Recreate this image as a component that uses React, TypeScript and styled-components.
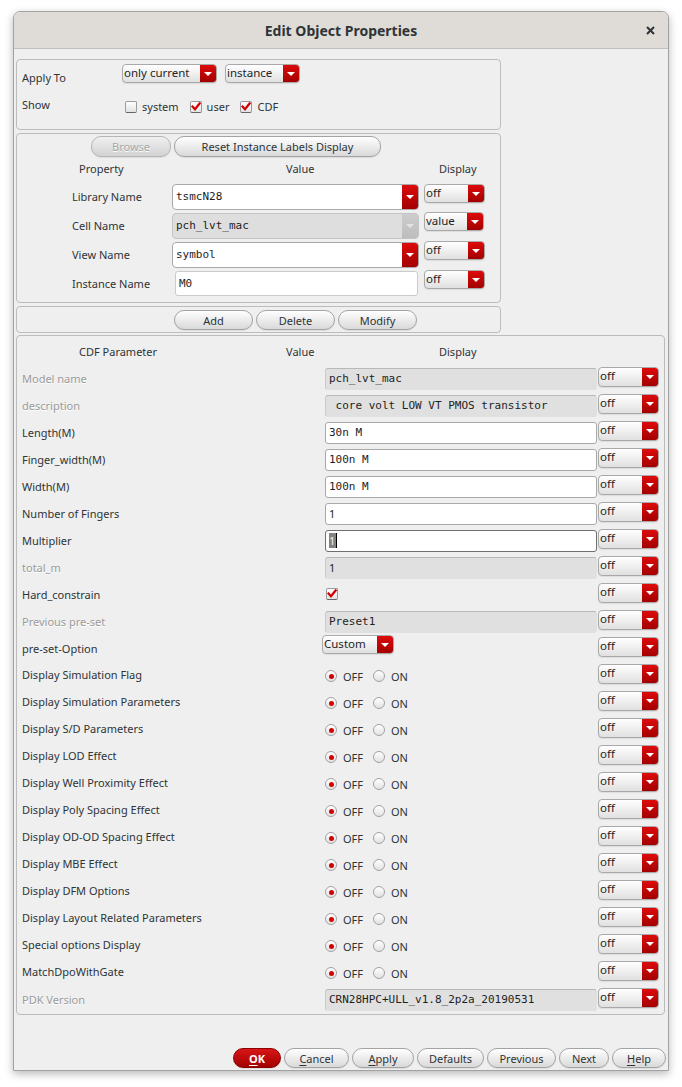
import React from 'react';
import styled, { createGlobalStyle, css } from 'styled-components';

const GlobalStyle = createGlobalStyle`
  html, body { margin: 0; padding: 0; background: #ffffff; }
  body {
    font-family: "Noto Sans", "Open Sans", sans-serif;
    font-size: 11px;
    color: #2e3436;
  }
  * { box-sizing: border-box; }
`;

const UI_FONT = `"Noto Sans", "Open Sans", sans-serif`;
const MONO_FONT = `"DejaVu Sans Mono", "Liberation Mono", monospace`;

const Page = styled.div`
  padding: 11px 0 0 13px;
  height: 1087px;
`;

const Dialog = styled.div`
  width: 656px;
  height: 1060px;
  border: 1px solid #a2a2a2;
  border-radius: 7px 7px 0 0;
  background: #efefef;
  box-shadow: 0 3px 9px rgba(0, 0, 0, 0.28);
  display: flex;
  flex-direction: column;
  overflow: hidden;
`;

const TitleBar = styled.div`
  flex: none;
  height: 37px;
  background: #dfdcd8;
  border-bottom: 1px solid #c4c0bb;
  display: grid;
  grid-template-columns: 1fr auto 1fr;
  align-items: center;
`;

const Title = styled.div`
  grid-column: 2;
  font-family: ${UI_FONT};
  font-weight: 700;
  font-size: 14px;
  color: #2e3436;
  white-space: nowrap;
`;

const CloseBtn = styled.div`
  grid-column: 3;
  justify-self: end;
  margin-right: 13px;
  width: 10px;
  height: 10px;
  display: flex;
  align-items: center;
  justify-content: center;
`;

const Body = styled.div`
  flex: 1;
  display: flex;
  flex-direction: column;
  padding: 10px 2px 2px 2px;
`;

const Group = styled.div<{ $w: number; $h: number; $mt: number; $pt: number; $pl?: number }>`
  flex: none;
  width: ${(p) => p.$w}px;
  height: ${(p) => p.$h}px;
  margin-top: ${(p) => p.$mt}px;
  padding-top: ${(p) => p.$pt}px;
  padding-left: ${(p) => p.$pl ?? 0}px;
  border: 1px solid #bcbcbc;
  border-radius: 4px;
  background: #efefef;
`;

/* ---------- generic widgets ---------- */

const ComboBox = styled.div<{ $w: number; $h?: number; $ml?: number; $mt?: number }>`
  display: flex;
  align-items: stretch;
  flex: none;
  align-self: start;
  width: ${(p) => p.$w}px;
  height: ${(p) => p.$h ?? 19}px;
  margin-left: ${(p) => p.$ml ?? 0}px;
  margin-top: ${(p) => p.$mt ?? 0}px;
  border: 1px solid #a9a9a9;
  border-radius: 4px;
  background: linear-gradient(#ffffff, #e0e0e0);
  box-shadow: 0 1px 1px rgba(0, 0, 0, 0.08);
  overflow: hidden;
`;

const ComboText = styled.span`
  flex: 1;
  padding-left: 1px;
  font-family: ${UI_FONT};
  font-size: 11.5px;
  line-height: 16px;
  color: #1e1e1e;
  white-space: nowrap;
  overflow: hidden;
`;

const ComboArrow = styled.span<{ $off?: boolean }>`
  flex: none;
  width: 16px;
  display: flex;
  align-items: center;
  justify-content: center;
  background: ${(p) =>
    p.$off ? 'linear-gradient(#cdcdcd, #bdbdbd)' : 'linear-gradient(#dd0b0b, #a30000)'};
  &::after {
    content: '';
    border-left: 4px solid transparent;
    border-right: 4px solid transparent;
    border-top: 4px solid ${(p) => (p.$off ? '#e4e4e4' : '#ffffff')};
  }
`;

const EditCombo = styled.div<{ $disabled?: boolean }>`
  display: flex;
  align-items: stretch;
  height: 26px;
  border: 1px solid ${(p) => (p.$disabled ? '#c4c4c4' : '#a9a9a9')};
  border-radius: 4px;
  background: ${(p) => (p.$disabled ? '#dedede' : '#ffffff')};
  overflow: hidden;
`;

const EditText = styled.span`
  flex: 1;
  padding-left: 3px;
  font-family: ${MONO_FONT};
  font-size: 11px;
  line-height: 24px;
  color: #1e1e1e;
  white-space: pre;
`;

const PlainInput = styled.div`
  align-self: start;
  height: 25px;
  margin: 0 1px 0 3px;
  border: 1px solid #cbcbcb;
  border-radius: 3px;
  background: #ffffff;
  padding-left: 3px;
  font-family: ${MONO_FONT};
  font-size: 11px;
  line-height: 23px;
  color: #1e1e1e;
`;

const Pill = styled.div<{ $w: number; $h?: number; $variant?: 'normal' | 'primary' | 'disabled' }>`
  flex: none;
  width: ${(p) => p.$w}px;
  height: ${(p) => p.$h ?? 20}px;
  border-radius: 10px;
  display: flex;
  align-items: center;
  justify-content: center;
  font-family: ${UI_FONT};
  font-size: 11px;
  white-space: nowrap;
  border: 1px solid #a3a3a3;
  background: linear-gradient(#ffffff, #d9d9d9);
  color: #2e3436;
  box-shadow: 0 1px 1px rgba(0, 0, 0, 0.08);
  ${(p) =>
    p.$variant === 'primary' &&
    css`
      border-color: #8c0000;
      background: linear-gradient(#d81616, #a20000);
      color: #ffffff;
      font-weight: 700;
    `}
  ${(p) =>
    p.$variant === 'disabled' &&
    css`
      border-color: #b5b5b5;
      background: linear-gradient(#f0f0f0, #d2d2d2);
      color: #a6a6a6;
      text-shadow: 0 1px 0 #ffffff;
    `}
  u { text-decoration: underline; text-underline-offset: 2px; }
`;

const CheckBoxBox = styled.span`
  flex: none;
  width: 12px;
  height: 12px;
  border: 1px solid #9b9b9b;
  border-bottom-color: #666666;
  border-radius: 2px;
  background: linear-gradient(#ffffff, #e2e2e2);
  display: flex;
  align-items: center;
  justify-content: center;
`;

const RadioDot = styled.span<{ $on?: boolean }>`
  flex: none;
  width: 12px;
  height: 12px;
  border-radius: 50%;
  border: 1px solid #a2a2a2;
  background: linear-gradient(#ffffff, #e2e2e2);
  display: flex;
  align-items: center;
  justify-content: center;
  &::after {
    content: '';
    width: 5px;
    height: 5px;
    border-radius: 50%;
    background: ${(p) => (p.$on ? '#d40000' : 'transparent')};
  }
`;

const Check = () => (
  <svg width="10" height="9" viewBox="0 0 10 9">
    <path d="M1.5 4.5 L4 7.2 L8.6 1.4" stroke="#d40000" strokeWidth="2.2" fill="none" strokeLinecap="square" />
  </svg>
);

const Combo = ({ text, w, h, off, ml, mt }: { text: string; w: number; h?: number; off?: boolean; ml?: number; mt?: number }) => (
  <ComboBox $w={w} $h={h} $ml={ml} $mt={mt}>
    <ComboText>{text}</ComboText>
    <ComboArrow $off={off} />
  </ComboBox>
);

/* ---------- section 1 ---------- */

const FormGrid = styled.div`
  display: grid;
  grid-template-columns: 100px 1fr;
  grid-template-rows: 32px 24px;
`;

const FormLabel = styled.div<{ $pt: number }>`
  padding-top: ${(p) => p.$pt}px;
  line-height: 15px;
  font-size: 11px;
  color: #2e3436;
`;

const ControlRow = styled.div<{ $gap: number; $pt?: number; $pl?: number }>`
  display: flex;
  align-items: flex-start;
  gap: ${(p) => p.$gap}px;
  padding-top: ${(p) => p.$pt ?? 0}px;
  padding-left: ${(p) => p.$pl ?? 0}px;
`;

const CheckItem = styled.label`
  display: flex;
  align-items: center;
  gap: 5px;
  margin-right: 6px;
  line-height: 15px;
  font-size: 11px;
`;

/* ---------- section 2 / headers ---------- */

const HeaderRow = styled.div<{ $mt: number }>`
  display: grid;
  grid-template-columns: 150px 247px 60px;
  column-gap: 5px;
  margin-top: ${(p) => p.$mt}px;
  height: 16px;
  line-height: 16px;
  font-size: 11px;
  color: #2e3436;
`;

const HeadCell = styled.div<{ $pl: number }>`
  padding-left: ${(p) => p.$pl}px;
  white-space: nowrap;
`;

const PropGrid = styled.div`
  display: grid;
  grid-template-columns: 150px 247px 60px;
  column-gap: 5px;
  row-gap: 3px;
  grid-auto-rows: 26px;
  margin-top: 7px;
`;

const PropLabel = styled.div`
  padding-left: 55px;
  align-self: center;
  font-size: 11px;
  line-height: 15px;
  margin-top: -1px;
`;

/* ---------- CDF section ---------- */

const CdfGrid = styled.div`
  display: grid;
  grid-template-columns: 303px 273px 61px;
  row-gap: 5px;
  grid-auto-rows: 22px;
  margin-top: 8px;
  padding-left: 5px;
`;

const CdfLabel = styled.div<{ $dim?: boolean; $up?: boolean }>`
  align-self: center;
  font-size: 11px;
  line-height: 15px;
  white-space: nowrap;
  margin-top: ${(p) => (p.$up ? -3 : -1)}px;
  color: ${(p) => (p.$dim ? '#9a9a9a' : '#2e3436')};
  ${(p) => p.$dim && 'text-shadow: 0 1px 0 #ffffff;'}
`;

const ValueField = styled.div<{ $kind: 'ro' | 'edit' | 'focus'; $mono?: boolean }>`
  height: 22px;
  border-radius: 3px;
  padding-left: 3px;
  font-family: ${(p) => (p.$mono ? MONO_FONT : UI_FONT)};
  font-size: 11px;
  line-height: 20px;
  white-space: pre;
  color: #1e1e1e;
  margin-right: 1px;
  ${(p) =>
    p.$kind === 'ro'
      ? css`
          background: #e0e0e0;
          border: 1px solid #e0e0e0;
          border-top-color: #b8b8b8;
          border-left-color: #cacaca;
        `
      : p.$kind === 'focus'
      ? css`
          background: #ffffff;
          border: 1px solid #6f6f6f;
        `
      : css`
          background: #ffffff;
          border: 1px solid #a9a9a9;
        `}
`;

const Selected = styled.span`
  background: #828282;
  color: #f2f2f2;
  border-right: 1px solid #000;
  padding-right: 1px;
`;

const DisplayCell = styled.div`
  display: flex;
  align-items: flex-start;
  margin-top: -1px;
`;

const CheckCell = styled.div`
  display: flex;
  align-items: center;
  padding-left: 1px;
  padding-bottom: 3px;
`;

const RadioCell = styled.div`
  display: flex;
  align-items: center;
  padding-top: 0px;
  font-size: 11px;
  line-height: 15px;
`;

const RadioText = styled.span<{ $mr: number }>`
  margin-left: 6px;
  margin-right: ${(p) => p.$mr}px;
`;

const Footer = styled.div`
  margin-top: auto;
  display: flex;
  justify-content: flex-end;
  gap: 3px;
`;

type Kind = 'ro' | 'edit' | 'focus' | 'check' | 'combo' | 'radio';
interface CdfRow {
  label: string;
  dim?: boolean;
  kind: Kind;
  value?: string;
  mono?: boolean;
}

const radioLabels = [
  'Display Simulation Flag',
  'Display Simulation Parameters',
  'Display S/D Parameters',
  'Display LOD Effect',
  'Display Well Proximity Effect',
  'Display Poly Spacing Effect',
  'Display OD-OD Spacing Effect',
  'Display MBE Effect',
  'Display DFM Options',
  'Display Layout Related Parameters',
  'Special options Display',
  'MatchDpoWithGate',
];

const cdfRows: CdfRow[] = [
  { label: 'Model name', dim: true, kind: 'ro', value: 'pch_lvt_mac', mono: true },
  { label: 'description', dim: true, kind: 'ro', value: ' core volt LOW VT PMOS transistor', mono: true },
  { label: 'Length(M)', kind: 'edit', value: '30n M', mono: true },
  { label: 'Finger_width(M)', kind: 'edit', value: '100n M', mono: true },
  { label: 'Width(M)', kind: 'edit', value: '100n M', mono: true },
  { label: 'Number of Fingers', kind: 'edit', value: '1' },
  { label: 'Multiplier', kind: 'focus', value: '1' },
  { label: 'total_m', dim: true, kind: 'ro', value: '1' },
  { label: 'Hard_constrain', kind: 'check' },
  { label: 'Previous pre-set', dim: true, kind: 'ro', value: 'Preset1', mono: true },
  { label: 'pre-set-Option', kind: 'combo', value: 'Custom' },
  ...radioLabels.map((l) => ({ label: l, kind: 'radio' as Kind })),
  { label: 'PDK Version', dim: true, kind: 'ro', value: 'CRN28HPC+ULL_v1.8_2p2a_20190531', mono: true },
];

const renderValue = (r: CdfRow) => {
  switch (r.kind) {
    case 'ro':
    case 'edit':
      return (
        <ValueField $kind={r.kind} $mono={r.mono}>
          {r.value}
        </ValueField>
      );
    case 'focus':
      return (
        <ValueField $kind="focus" $mono={r.mono}>
          <Selected>{r.value}</Selected>
        </ValueField>
      );
    case 'check':
      return (
        <CheckCell>
          <CheckBoxBox>
            <Check />
          </CheckBoxBox>
        </CheckCell>
      );
    case 'combo':
      return <Combo text={r.value ?? ''} w={72} ml={-3} mt={-3} />;
    case 'radio':
      return (
        <RadioCell>
          <RadioDot $on />
          <RadioText $mr={10}>OFF</RadioText>
          <RadioDot />
          <RadioText $mr={0}>ON</RadioText>
        </RadioCell>
      );
    default:
      return null;
  }
};

export default function App() {
  return (
    <>
      <GlobalStyle />
      <Page>
        <Dialog>
          <TitleBar>
            <Title>Edit Object Properties</Title>
            <CloseBtn>
              <svg width="9" height="9" viewBox="0 0 9 9">
                <path d="M1 1 L8 8 M8 1 L1 8" stroke="#2e3436" strokeWidth="2" />
              </svg>
            </CloseBtn>
          </TitleBar>
          <Body>
            <Group $w={485} $h={71} $mt={0} $pt={4} $pl={5}>
              <FormGrid>
                <FormLabel $pt={6}>Apply To</FormLabel>
                <ControlRow $gap={8}>
                  <Combo text="only current" w={95} />
                  <Combo text="instance" w={75} />
                </ControlRow>
                <FormLabel $pt={1}>Show</FormLabel>
                <ControlRow $gap={5} $pt={3} $pl={3}>
                  <CheckItem>
                    <CheckBoxBox />
                    system
                  </CheckItem>
                  <CheckItem>
                    <CheckBoxBox>
                      <Check />
                    </CheckBoxBox>
                    user
                  </CheckItem>
                  <CheckItem>
                    <CheckBoxBox>
                      <Check />
                    </CheckBoxBox>
                    CDF
                  </CheckItem>
                </ControlRow>
              </FormGrid>
            </Group>

            <Group $w={485} $h={170} $mt={3} $pt={2}>
              <ControlRow $gap={3} $pl={74}>
                <Pill $w={80} $h={21} $variant="disabled">
                  Browse
                </Pill>
                <Pill $w={207} $h={21}>
                  Reset Instance Labels Display
                </Pill>
              </ControlRow>
              <HeaderRow $mt={4}>
                <HeadCell $pl={62}>Property</HeadCell>
                <HeadCell $pl={114}>Value</HeadCell>
                <HeadCell $pl={15}>Display</HeadCell>
              </HeaderRow>
              <PropGrid>
                <PropLabel>Library Name</PropLabel>
                <EditCombo>
                  <EditText>tsmcN28</EditText>
                  <ComboArrow />
                </EditCombo>
                <Combo text="off" w={61} />

                <PropLabel>Cell Name</PropLabel>
                <EditCombo $disabled>
                  <EditText>pch_lvt_mac</EditText>
                  <ComboArrow $off />
                </EditCombo>
                <Combo text="value" w={60} mt={-1} />

                <PropLabel>View Name</PropLabel>
                <EditCombo>
                  <EditText>symbol</EditText>
                  <ComboArrow />
                </EditCombo>
                <Combo text="off" w={61} mt={-1} />

                <PropLabel>Instance Name</PropLabel>
                <PlainInput>M0</PlainInput>
                <Combo text="off" w={61} mt={-1} />
              </PropGrid>
            </Group>

            <Group $w={485} $h={27} $mt={3} $pt={3} $pl={157}>
              <ControlRow $gap={3}>
                <Pill $w={79}>Add</Pill>
                <Pill $w={79}>Delete</Pill>
                <Pill $w={79}>Modify</Pill>
              </ControlRow>
            </Group>

            <Group $w={649} $h={680} $mt={2} $pt={8}>
              <HeaderRow $mt={0}>
                <HeadCell $pl={62}>CDF Parameter</HeadCell>
                <HeadCell $pl={114}>Value</HeadCell>
                <HeadCell $pl={15}>Display</HeadCell>
              </HeaderRow>
              <CdfGrid>
                {cdfRows.map((r) => (
                  <React.Fragment key={r.label}>
                    <CdfLabel $dim={r.dim} $up={r.kind === 'radio'}>
                      {r.label}
                    </CdfLabel>
                    {renderValue(r)}
                    <DisplayCell>
                      <Combo text="off" w={61} h={20} />
                    </DisplayCell>
                  </React.Fragment>
                ))}
              </CdfGrid>
            </Group>

            <Footer>
              <Pill $w={48} $variant="primary">
                <span>
                  <u>O</u>K
                </span>
              </Pill>
              <Pill $w={65}>
                <span>
                  <u>C</u>ancel
                </span>
              </Pill>
              <Pill $w={62}>
                <span>
                  <u>A</u>pply
                </span>
              </Pill>
              <Pill $w={67}>Defaults</Pill>
              <Pill $w={69}>Previous</Pill>
              <Pill $w={50}>Next</Pill>
              <Pill $w={54}>
                <span>
                  <u>H</u>elp
                </span>
              </Pill>
            </Footer>
          </Body>
        </Dialog>
      </Page>
    </>
  );
}
